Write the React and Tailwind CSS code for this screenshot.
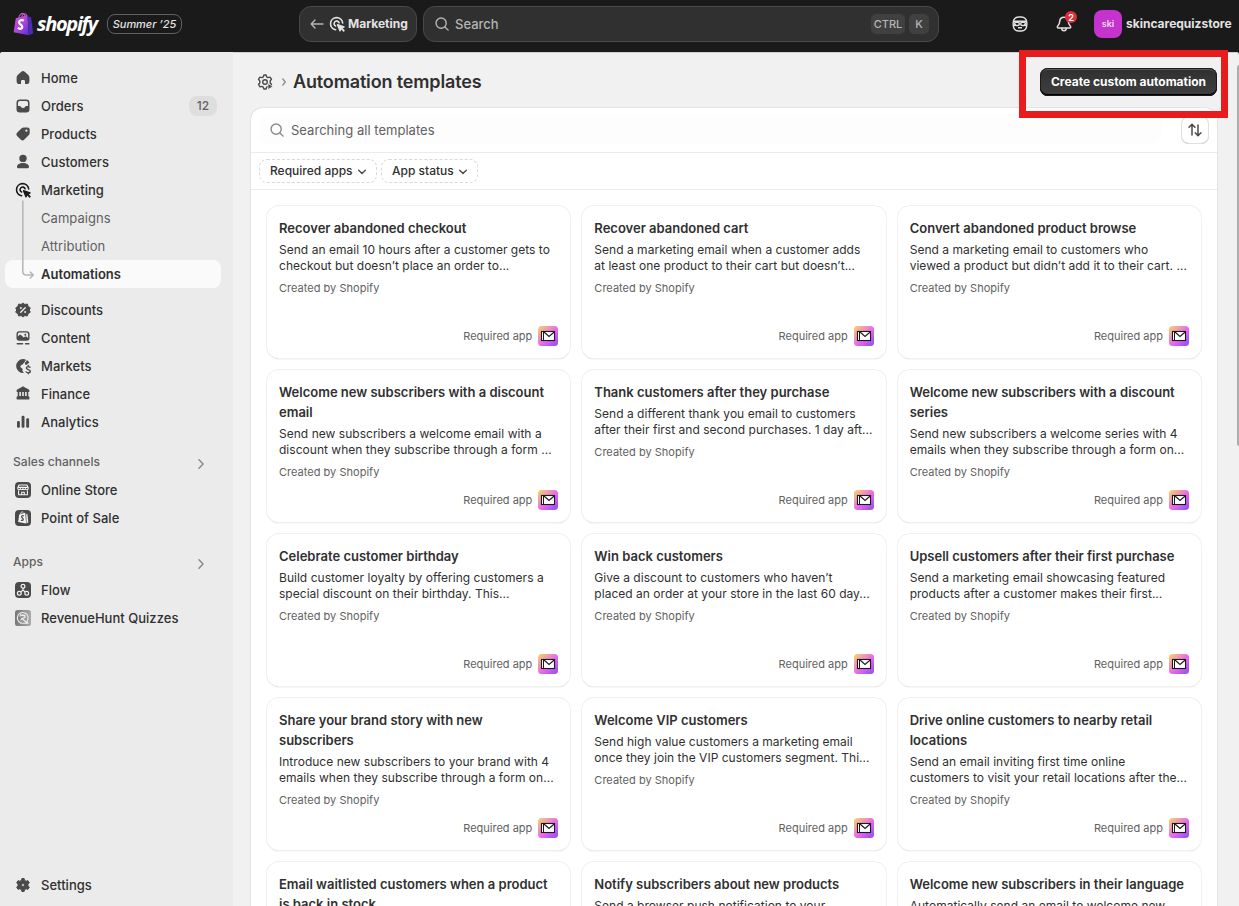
import React from "react";

const templates = [
  [["Recover abandoned checkout"], ["Send an email 10 hours after a customer gets to", "checkout but doesn’t place an order to..."]],
  [["Recover abandoned cart"], ["Send a marketing email when a customer adds", "at least one product to their cart but doesn’t..."]],
  [["Convert abandoned product browse"], ["Send a marketing email to customers who", "viewed a product but didn’t add it to their cart. ..."]],
  [["Welcome new subscribers with a discount", "email"], ["Send new subscribers a welcome email with a", "discount when they subscribe through a form ..."]],
  [["Thank customers after they purchase"], ["Send a different thank you email to customers", "after their first and second purchases. 1 day aft..."]],
  [["Welcome new subscribers with a discount", "series"], ["Send new subscribers a welcome series with 4", "emails when they subscribe through a form on..."]],
  [["Celebrate customer birthday"], ["Build customer loyalty by offering customers a", "special discount on their birthday. This..."]],
  [["Win back customers"], ["Give a discount to customers who haven’t", "placed an order at your store in the last 60 day..."]],
  [["Upsell customers after their first purchase"], ["Send a marketing email showcasing featured", "products after a customer makes their first..."]],
  [["Share your brand story with new", "subscribers"], ["Introduce new subscribers to your brand with 4", "emails when they subscribe through a form on..."]],
  [["Welcome VIP customers"], ["Send high value customers a marketing email", "once they join the VIP customers segment. Thi..."]],
  [["Drive online customers to nearby retail", "locations"], ["Send an email inviting first time online", "customers to visit your retail locations after the..."]],
  [["Email waitlisted customers when a product", "is back in stock"], []],
  [["Notify subscribers about new products"], ["Send a browser push notification to your"]],
  [["Welcome new subscribers in their language"], ["Automatically send an email to welcome new"]],
];

function Icon({ children, className = "size-5 shrink-0" }) {
  return (
    <svg viewBox="0 0 20 20" fill="currentColor" className={className}>
      {children}
    </svg>
  );
}

const TargetShape = () => (
  <>
    <path d="M8.600 15.700A6.100 6.100 0 1 1 15.700 9" fill="none" stroke="currentColor" strokeWidth="1.600" strokeLinecap="round" />
    <path d="M8.600 12A2.600 2.600 0 1 1 12.100 8.700" fill="none" stroke="currentColor" strokeWidth="1.600" strokeLinecap="round" />
    <path d="M9.900 11c-.2-.6.4-1.200 1-1l6.300 2.200c.7.3.7 1.200 0 1.500l-1.500.6 1.800 1.700c.8.8-.6 2.200-1.400 1.400l-1.700-1.800-.6 1.500c-.3.7-1.200.6-1.500-.1z" />
  </>
);

const icons = {
  home: <path d="M8.300 3.700a2.500 2.500 0 0 1 3.400 0l3.600 3.400q1.100 1 1.100 2.500v3.700q0 2.800-2.800 2.800h-.9a.7.7 0 0 1-.7-.7v-2.200a1.200 1.200 0 0 0-1.200-1.200h-1.600a1.200 1.200 0 0 0-1.200 1.200v2.200a.7.7 0 0 1-.7.7h-.9q-2.800 0-2.800-2.800v-3.700q0-1.500 1.100-2.500z" />,
  orders: <path fillRule="evenodd" d="M6.700 3.500h6.600a3.200 3.200 0 0 1 3.200 3.200v6.600a3.200 3.200 0 0 1-3.200 3.200h-6.600a3.200 3.200 0 0 1-3.200-3.200v-6.600a3.200 3.200 0 0 1 3.200-3.200zm.1 1.500a1.800 1.800 0 0 0-1.800 1.800v3.200h1.700c.6 0 .9.3 1.200.7l.3.5c.4.5.9.8 1.800.8s1.400-.3 1.800-.8l.3-.5c.3-.4.6-.7 1.200-.7h1.700v-3.200a1.800 1.800 0 0 0-1.800-1.800z" />,
  products: <path fillRule="evenodd" d="M10.800 3.500h3.700a2.200 2.200 0 0 1 2.200 2.200v3.300c0 .8-.3 1.500-.8 2l-4.500 4.600a2.600 2.600 0 0 1-3.700 0l-3.400-3.300a2.600 2.600 0 0 1 0-3.700l4.300-4.300c.6-.5 1.400-.8 2.200-.8zm2.600 4.300a1.100 1.100 0 1 0 0-2.200 1.100 1.100 0 0 0 0 2.200z" />,
  customers: (
    <>
      <circle cx="10" cy="6.400" r="3.700" />
      <path d="M4 14.700c0-2 2.500-3.700 6-3.700s6 1.700 6 3.700c0 .9-.7 1.600-1.700 1.600h-8.600c-1 0-1.700-.7-1.700-1.600z" />
    </>
  ),
  target: <TargetShape />,
  discounts: (
    <>
      <path d="M10 3l1.900 1.500 2.500-.5.7 2.400 2.200 1.500-1.100 2.100 1.100 2.200-2.200 1.400-.7 2.400-2.500-.5-1.900 1.500-1.900-1.500-2.500.5-.7-2.400-2.200-1.400 1.100-2.200-1.100-2.100 2.200-1.500.7-2.400 2.500.5z" strokeWidth="1" stroke="currentColor" strokeLinejoin="round" />
      <path d="M7.700 12.300l4.500-4.600" stroke="#ebebeb" strokeWidth="1.400" strokeLinecap="round" />
      <circle cx="7.900" cy="8" r="1" fill="#ebebeb" />
      <circle cx="12.100" cy="12" r="1" fill="#ebebeb" />
    </>
  ),
  content: (
    <>
      <path fillRule="evenodd" d="M6.200 3.200h7.600a2.700 2.700 0 0 1 2.700 2.700v4.200a2.700 2.700 0 0 1-2.700 2.700h-7.600a2.700 2.700 0 0 1-2.700-2.700v-4.200a2.700 2.700 0 0 1 2.700-2.700zm.2 1.400a1.500 1.500 0 0 0-1.500 1.500v2.300l1.200-1.100c.7-.6 1.500-.6 2.200 0l2.400 2.300 1.100-.9c.5-.4 1.200-.4 1.700 0l1.600 1.200v-3.800a1.500 1.500 0 0 0-1.500-1.500z" />
      <circle cx="12.300" cy="6.700" r="1" />
      <path d="M4.300 15.800h5.200M12.600 15.800h3.200" stroke="currentColor" strokeWidth="1.500" strokeLinecap="round" />
    </>
  ),
  markets: (
    <>
      <path d="M10.300 3a7 7 0 1 0 1 13.900c-.9-.4-1.500-1-1.700-1.900-.3-1 .3-1.600-.2-2.300-.5-.8-1.500-.7-1.900-1.700-.4-1 .2-1.700 1.300-2 1.300-.4 1.200-1.300 2.100-1.900.9-.5.6-1.500 1.300-2.100.5-.5.7-1 .5-1.600a7 7 0 0 0-2.400-.4z" />
      <path d="M13.800 4.100c1.200.6 2 1.500 2.600 2.800-.8.1-1.300.3-1.700.9-.4.5-.7 1-1.500 1-1 0-1.400-.7-1.300-1.500.1-1.300 1.700-1.600 1.900-3.200z" />
      <path d="M17 11.300c-.5-.5-1.100-.7-1.800-.7-1 0-1.800.6-1.800 1.500 0 2.100 3.900 1.100 3.900 3.200 0 .9-.9 1.500-2 1.500-.8 0-1.600-.3-2.100-.9M15.300 9.500v1M15.300 17v.8" fill="none" stroke="currentColor" strokeWidth="1.400" strokeLinecap="round" />
    </>
  ),
  finance: (
    <>
      <path d="M8.900 2.900c.7-.4 1.500-.4 2.200 0l4.300 2.300c.7.4 1.100 1 1.100 1.700 0 .7-.5 1.200-1.200 1.200h-10.600c-.7 0-1.200-.5-1.200-1.200 0-.7.4-1.300 1.100-1.700z" />
      <path d="M4.700 7.500h1.600v5h-1.600zM7.900 7.500h1.300v5h-1.300zM10.800 7.500h1.300v5h-1.300zM13.700 7.500h1.600v5h-1.600z" />
      <path d="M5.100 12h9.800c.9 0 1.600.9 1.600 2.200 0 .8-.4 1.300-1.100 1.300h-10.800c-.7 0-1.100-.5-1.100-1.300 0-1.300.7-2.200 1.600-2.200z" />
    </>
  ),
  analytics: (
    <>
      <rect x="4" y="9" width="2.900" height="6.700" rx="1.200" />
      <rect x="8.600" y="3.700" width="2.900" height="12" rx="1.200" />
      <rect x="13.200" y="6.200" width="2.900" height="9.500" rx="1.200" />
    </>
  ),
  store: (
    <>
      <rect x="2" y="2" width="16" height="16" rx="4" />
      <path d="M6 5h8l1.300 3c0 2-2.600 2.300-2.900.5-.3 1.700-2.400 1.700-2.500 0-.1 1.700-2.300 1.700-2.500 0-.3 1.800-2.800 1.500-2.700-.5zM5.600 10.500v4.300h8.800v-4.300M8.700 14.800v-2.500h2.600v2.500M5.500 7.400h9" fill="none" stroke="#f3f3f3" strokeWidth="1.100" strokeLinejoin="round" />
    </>
  ),
  pos: (
    <>
      <rect x="2" y="2" width="16" height="16" rx="4" />
      <path d="M6.200 6.600l6-1.900 1 10.700-8-1.300z" fill="#f3f3f3" />
      <path d="M13.200 5.700l1.300.9.800 8-1.700.6z" fill="#f3f3f3" />
      <path d="M7.700 5.900c.2-1.900 1.700-2.800 2.700-1.400" fill="none" stroke="#f3f3f3" strokeWidth=".9" />
      <path d="M10.900 8c-1.300-.7-2.500-.1-2.400.8.2 1.100 1.900 1.300 1.800 2.600-.1 1.200-1.300 1.300-2.300.6" fill="none" stroke="#4a4a4a" strokeWidth="1.200" />
    </>
  ),
  flow: (
    <>
      <rect x="2" y="2" width="16" height="16" rx="4" />
      <g fill="none" stroke="#f3f3f3" strokeWidth="1.200">
        <circle cx="10" cy="6.200" r="1.900" />
        <circle cx="6.300" cy="13.300" r="1.900" />
        <circle cx="13.700" cy="13.300" r="1.900" />
        <path d="M10 8.100v2.100l-2.300 1.600M10 10.200l2.300 1.600" />
      </g>
    </>
  ),
  quiz: (
    <>
      <defs>
        <linearGradient id="quiz" x1="0" x2="1">
          <stop offset="0" stopColor="#777" />
          <stop offset="1" stopColor="#aaa" />
        </linearGradient>
      </defs>
      <rect x="2" y="2" width="16" height="16" rx="2.500" fill="url(#quiz)" />
      <g fill="none" stroke="#f0f0f0" strokeWidth="1.100">
        <path d="M15 15.300h-5.200a5.400 5.400 0 1 1 4.200-2.100z" />
        <path d="M6.600 8.200c2.500-1.500 6-.3 5.600 1.100-.3 1.300-2.600.3-3.700 1.500-.6.7-.2 1.700-.2 1.700M9.500 11l4.500 4M7 6.700l5.500.6" />
      </g>
    </>
  ),
  settings: (
    <path fillRule="evenodd" d="M8.900 3.500h2.200l.5 1.900 1.500.8 1.900-.5 1.300 2.100-1.300 1.400v1.600l1.300 1.400-1.300 2.100-1.900-.5-1.500.8-.5 1.900h-2.200l-.5-1.900-1.500-.8-1.900.5-1.300-2.100 1.300-1.400V9.200l-1.300-1.400 1.300-2.100 1.900.5 1.500-.8zm1.100 5a1.500 1.500 0 1 0 0 3 1.500 1.500 0 0 0 0-3z" stroke="currentColor" strokeWidth="1" strokeLinejoin="round" />
  ),
};

function NavItem({ icon, label, badge, dark }) {
  return (
    <a className="flex h-7 items-center gap-2 px-2 text-[13px] font-[550] text-[#303030]">
      <Icon className={dark ? "size-5 shrink-0 text-[#1a1a1a]" : "size-5 shrink-0 text-[#4a4a4a]"}>{icons[icon]}</Icon>
      <span className="flex-1 pt-0.5 tracking-[0.020px] whitespace-nowrap">{label}</span>
      {badge && (
        <span className="mr-[-4px] flex h-5 w-7 items-center justify-center rounded-lg bg-[#dedede] text-[12px] font-[450] text-[#616161]">{badge}</span>
      )}
    </a>
  );
}

function SectionHead({ label }) {
  return (
    <div className="flex h-7 items-center justify-between pr-[15px] pl-2 text-[12px] font-[550] tracking-[0.060px] text-[#616161]">
      {label}
      <svg viewBox="0 0 10 12" className="mt-1 h-3 w-2.5" fill="none" stroke="#8a8a8a" strokeWidth="1.500" strokeLinecap="round" strokeLinejoin="round">
        <path d="M3 1.800L7 6l-4 4.200" />
      </svg>
    </div>
  );
}

function SearchGlyph({ className }) {
  return (
    <svg viewBox="0 0 16 16" className={className} fill="none" stroke="currentColor" strokeWidth="1.600" strokeLinecap="round">
      <circle cx="7" cy="7" r="5.800" />
      <path d="M11.300 11.300l3.700 3.700" />
    </svg>
  );
}

function TopBar() {
  return (
    <header className="flex h-[52px] shrink-0 items-center bg-[#1a1a1a] pb-1 text-[#e3e3e3]">
      <div className="flex w-[299px] shrink-0 items-center pl-[13px]">
        <svg viewBox="0 0 22 24" className="h-6 w-[22px]">
          <defs>
            <linearGradient id="bag" x1="0" y1="0" x2="1" y2="1">
              <stop offset="0" stopColor="#d957c4" />
              <stop offset=".55" stopColor="#a546dc" />
              <stop offset="1" stopColor="#5a2bd0" />
            </linearGradient>
          </defs>
          <path d="M2.800 6.300L14.500 3l1.200 20.200L.6 20.300z" fill="url(#bag)" />
          <path d="M14.500 3l1.300 1.800 2.200.3 2.200 16.200-4.500 1.900z" fill="#4e2bb3" />
          <path d="M5.500 6.500C6.300 2.400 9.400.2 11 2.200c.7.900.8 2.200.8 3M8.800 5C9.300 1.800 12.500.2 13.700 3.800" fill="none" stroke="#c154ca" strokeWidth="1.100" />
          <path d="M10.900 8.600c-2.400-1.200-5-.1-4.800 1.900.2 2.200 3.400 2.400 3.200 4.700-.2 2-2.600 2-4.500.7" fill="none" stroke="#fff" strokeWidth="2.200" />
        </svg>
        <span className="ml-[2px] w-[63px] font-['Open_Sans',sans-serif] text-[20px] leading-6 font-bold tracking-[-1.300px] text-white italic">shopify</span>
        <span className="ml-[7px] flex h-5 w-[75px] items-center justify-center rounded-lg border border-[#616161] pt-px text-[11px] font-[550] tracking-[-0.040px] whitespace-nowrap italic">Summer ’25</span>
      </div>
      <div className="flex h-9 w-[118px] shrink-0 items-center rounded-xl border border-[#494949] bg-[#303030] pl-[10px]">
        <svg viewBox="0 0 14 12" className="h-3 w-3.5" fill="none" stroke="#b5b5b5" strokeWidth="1.400" strokeLinecap="round" strokeLinejoin="round">
          <path d="M13 6H1.200M5 2L1.200 6 5 10" />
        </svg>
        <Icon className="ml-[3px] size-5 shrink-0 text-[#e3e3e3]">{icons.target}</Icon>
        <span className="ml-[1px] text-[12px] font-[650]">Marketing</span>
      </div>
      <div className="ml-[6px] flex h-9 w-[516px] shrink-0 items-center rounded-xl border border-[#494949] bg-[#303030] pr-[9px] pl-[11px]">
        <SearchGlyph className="size-[14px] text-[#b5b5b5]" />
        <span className="ml-[6px] flex-1 pt-px text-[13px] font-[450] text-[#b5b5b5]">Search</span>
        <kbd className="flex h-5 w-[34px] items-center justify-center rounded-[5px] bg-[#404040] font-[Inter,sans-serif] text-[11px] font-[550] text-[#b5b5b5]">CTRL</kbd>
        <kbd className="ml-1 flex h-5 w-5 items-center justify-center rounded-[5px] bg-[#404040] font-[Inter,sans-serif] text-[11px] font-[550] text-[#b5b5b5]">K</kbd>
      </div>
      <svg viewBox="0 0 16 16" className="ml-[73px] size-4 shrink-0" fill="none" stroke="#e3e3e3" strokeWidth="1.400">
        <rect x="1.200" y="1" width="13.600" height="14" rx="5.500" />
        <path d="M1.200 5.200h13.600M1.200 10.200L4 8.600M14.800 10.200L12 8.600M6 11.800h4" />
        <rect x="2.600" y="6.300" width="4.700" height="3.200" rx="1.500" />
        <rect x="8.700" y="6.300" width="4.700" height="3.200" rx="1.500" />
      </svg>
      <div className="relative ml-[28px] size-4 shrink-0">
        <svg viewBox="0 0 16 16" className="size-4" fill="none" stroke="#e3e3e3" strokeWidth="1.500" strokeLinejoin="round">
          <path d="M8 1.200c-2.600 0-4.200 1.900-4.300 4.300-.1 2.400-.9 3.400-2 4.600-.7.800-.4 2 .7 2h11.200c1.100 0 1.400-1.200.7-2-1.100-1.200-1.900-2.200-2-4.600C12.200 3.100 10.600 1.200 8 1.200zM5.700 12.300c.2 3.300 4.400 3.300 4.600 0" />
        </svg>
        <span className="absolute -top-[5px] left-[9px] flex size-3 items-center justify-center rounded-full bg-[#e22c38] text-[9px] leading-none font-bold text-white">2</span>
      </div>
      <span className="ml-[22px] flex size-7 shrink-0 items-center justify-center rounded-lg bg-[#c433cb] text-[9px] font-semibold text-[#f5dcf6]">ski</span>
      <span className="ml-1 text-[12px] font-[650] whitespace-nowrap">skincarequizstore</span>
    </header>
  );
}

function Sidebar() {
  return (
    <nav className="flex w-[233px] shrink-0 flex-col bg-[#ebebeb] pt-3 pr-3 pb-[7px] pl-[5px]">
      <NavItem icon="home" label="Home" />
      <NavItem icon="orders" label="Orders" badge="12" />
      <NavItem icon="products" label="Products" />
      <NavItem icon="customers" label="Customers" />
      <NavItem icon="target" label="Marketing" dark />
      <div className="relative mb-2 text-[13px]">
        <div className="flex h-7 items-center pt-0.5 pl-9 font-[440] tracking-[0.050px] text-[#616161]">Campaigns</div>
        <div className="flex h-7 items-center pt-0.5 pl-9 font-[440] tracking-[0.050px] text-[#616161]">Attribution</div>
        <div className="flex h-7 items-center rounded-lg bg-[#fafafa] pt-0.5 pl-9 font-[620] text-[#303030]">Automations</div>
        <svg viewBox="0 0 14 82" className="absolute -top-1 left-4 h-[82px] w-3.5" fill="none" stroke="#b5b5b5" strokeWidth="1.500" strokeLinecap="round" strokeLinejoin="round">
          <path d="M1.800 1v70.500q0 3.500 3.500 3.500H12M9.300 72l3 3-3 3" />
        </svg>
      </div>
      <NavItem icon="discounts" label="Discounts" />
      <NavItem icon="content" label="Content" />
      <NavItem icon="markets" label="Markets" />
      <NavItem icon="finance" label="Finance" />
      <NavItem icon="analytics" label="Analytics" />
      <div className="mt-3">
        <SectionHead label="Sales channels" />
        <NavItem icon="store" label="Online Store" />
        <NavItem icon="pos" label="Point of Sale" />
      </div>
      <div className="mt-4">
        <SectionHead label="Apps" />
        <NavItem icon="flow" label="Flow" />
        <NavItem icon="quiz" label="RevenueHunt Quizzes" />
      </div>
      <div className="mt-auto">
        <NavItem icon="settings" label="Settings" />
      </div>
    </nav>
  );
}

function MailBadge() {
  return (
    <svg viewBox="0 0 20 20" className="size-5">
      <defs>
        <linearGradient id="mail" x1="0" y1="0" x2="1" y2="1">
          <stop offset=".05" stopColor="#f4cf6e" />
          <stop offset=".55" stopColor="#e966ee" />
          <stop offset="1" stopColor="#8b4df0" />
        </linearGradient>
      </defs>
      <rect width="20" height="20" rx="3.500" fill="url(#mail)" />
      <rect x="3.500" y="5.500" width="13" height="9" fill="#fff" stroke="#1a1a1a" strokeWidth="1.100" />
      <path d="M5.500 5.500v9" stroke="#1a1a1a" strokeWidth="1" />
      <path d="M6 6l5 4.500L16.200 6" fill="none" stroke="#1a1a1a" strokeWidth="1.100" />
    </svg>
  );
}

function Card({ title, text }) {
  return (
    <article className="flex h-[152px] flex-col rounded-xl bg-white p-3 shadow-[0_0_0_1px_#f0f0f0,0_1px_0_0_#cccccc,0_2px_2px_-1px_rgba(0,0,0,0.12)]">
      <h3 className="text-[13px] leading-5 font-[620] text-[#303030]">
        {title.map((line) => (
          <span key={line} className="block whitespace-nowrap">{line}</span>
        ))}
      </h3>
      <p className="mt-1 text-[12px] leading-4 font-[425] tracking-[0.025px] text-[#303030]">
        {text.map((line) => (
          <span key={line} className="block whitespace-nowrap">{line}</span>
        ))}
      </p>
      {text.length > 1 && (
        <>
          <p className="mt-2 text-[11px] leading-3 font-[425] tracking-[0.020px] text-[#616161]">Created by Shopify</p>
          <div className="mt-auto flex items-center justify-end gap-1.5 text-[11px] font-[425] text-[#616161]">
            Required app
            <MailBadge />
          </div>
        </>
      )}
    </article>
  );
}

function FilterPill({ label, className }) {
  return (
    <button className={className}>
      {label}
      <svg viewBox="0 0 10 8" className="mt-px h-2 w-2.5" fill="none" stroke="#4a4a4a" strokeWidth="1.400" strokeLinecap="round" strokeLinejoin="round">
        <path d="M1.700 2.300L5 5.600l3.300-3.300" />
      </svg>
    </button>
  );
}

export default function App() {
  return (
    <div className="relative flex h-[906px] w-[1239px] flex-col overflow-hidden bg-[#1a1a1a] font-[Inter,sans-serif]">
      <TopBar />
      <div className="flex min-h-0 flex-1 overflow-hidden rounded-t-[3px] bg-[#f1f1f1] shadow-[inset_0_1px_0_#cfcfcf]">
        <Sidebar />
        <main className="flex min-w-0 flex-1 flex-col overflow-hidden pr-[22px] pl-[18px]">
          <div className="flex h-14 shrink-0 items-center pt-1 pl-1">
            <svg viewBox="0 0 20 20" className="size-5" fill="none" stroke="#4a4a4a" strokeWidth="1.400" strokeLinejoin="round">
              <path d="M8.900 3h2.200l.6 1.900 1.300.7 2-.5 1.500 2.100-1.300 1.800v2l1.300 1.500-1.500 2.400-2-.5-1.300.7-.6 1.900h-2.200l-.6-1.900-1.300-.7-2 .5L3.500 12.500l1.300-1.500V9L3.500 7.200 5 5.100l2 .5 1.300-.7z" />
              <circle cx="10" cy="10" r="2.300" />
              <path d="M13 11.500v6l4.900-3z" fill="#4a4a4a" stroke="#f1f1f1" strokeWidth=".7" />
            </svg>
            <svg viewBox="0 0 6 10" className="ml-[6px] h-2.5 w-1.5" fill="none" stroke="#8a8a8a" strokeWidth="1.300" strokeLinecap="round" strokeLinejoin="round">
              <path d="M1.800 2L4.300 5 1.800 8" />
            </svg>
            <h1 className="ml-[6px] flex-1 pb-0.5 text-[18px] font-[620] tracking-[-0.150px] text-[#303030]">Automation templates</h1>
            <button className="flex h-7 w-[177px] items-center justify-center rounded-lg bg-linear-to-b from-[#2f2f2f] to-[#404040] text-[12px] font-[650] whitespace-nowrap text-white shadow-[inset_0_0_0_1px_#1a1a1a,inset_0_2px_0_0_#5c5c5c,inset_0_-2px_0_0_#000]">
              Create custom automation
            </button>
          </div>
          <section className="min-h-0 w-[966px] flex-1 overflow-hidden rounded-t-xl bg-white shadow-[0_0_0_1px_#e3e3e3]">
            <div className="flex h-[45px] items-center border-b border-[#ebebeb] pr-2 pl-2">
              <div className="flex h-7 flex-1 items-center rounded-lg bg-[#fdfdfd] pl-[11px]">
                <SearchGlyph className="size-[14px] text-[#8a8a8a]" />
                <span className="ml-[7px] pt-0.5 text-[13px] font-[430] tracking-[0.030px] text-[#616161]">Searching all templates</span>
              </div>
              <button className="ml-5 flex size-7 items-center justify-center rounded-lg bg-white shadow-[inset_0_0_0_1px_#e0e0e0,inset_0_-1px_0_0_#b5b5b5]">
                <svg viewBox="0 0 16 16" className="size-4" fill="none" stroke="#4a4a4a" strokeWidth="1.500" strokeLinecap="round" strokeLinejoin="round">
                  <path d="M5 13V2.500M2 5.300l3-3 3 3M11 3v10.500M8.200 10.700l2.800 3 3-3" />
                </svg>
              </button>
            </div>
            <div className="flex h-[37px] items-center gap-1 border-b border-[#ebebeb] pl-2 text-[12px] font-[450] text-[#303030]">
              <FilterPill label="Required apps" className="flex h-6 w-[118px] items-center gap-1 rounded-lg border border-dashed border-[#d8d8d8] pl-[10px] whitespace-nowrap" />
              <FilterPill label="App status" className="flex h-6 w-[97px] items-center gap-1 rounded-lg border border-dashed border-[#d8d8d8] pl-[10px] whitespace-nowrap" />
            </div>
            <div className="grid grid-cols-3 gap-3 p-4">
              {templates.map(([title, text]) => (
                <Card key={title.join()} title={title} text={text} />
              ))}
            </div>
          </section>
        </main>
        <div className="absolute top-[65px] right-0 h-[381px] w-[2px] rounded-l-sm bg-[#adadad]" />
      </div>
      <div className="absolute top-[50px] left-[1019px] h-[68px] w-[209px] border-[7px] border-[#e81c1c]" />
    </div>
  );
}
